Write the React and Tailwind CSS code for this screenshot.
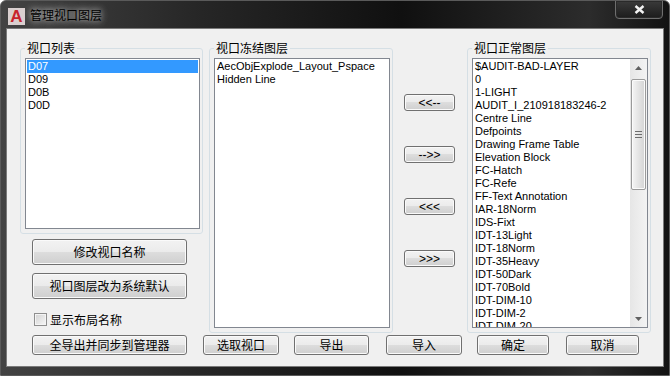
import React from "react";

const cjk = "font-['Noto_Sans_CJK_SC','Liberation_Sans',sans-serif]";
const latin = "font-['Liberation_Sans','Noto_Sans_CJK_SC',sans-serif]";
const btnSkin =
  "border border-[#707070] rounded-[3px] bg-[linear-gradient(to_bottom,#f2f2f2_0%,#ebebeb_50%,#dddddd_50%,#cfcfcf_100%)] shadow-[inset_0_0_0_1px_#fafafa] flex items-center justify-center text-black";

const normalLayers = [
  "$AUDIT-BAD-LAYER",
  "0",
  "1-LIGHT",
  "AUDIT_I_210918183246-2",
  "Centre Line",
  "Defpoints",
  "Drawing Frame Table",
  "Elevation Block",
  "FC-Hatch",
  "FC-Refe",
  "FF-Text Annotation",
  "IAR-18Norm",
  "IDS-Fixt",
  "IDT-13Light",
  "IDT-18Norm",
  "IDT-35Heavy",
  "IDT-50Dark",
  "IDT-70Bold",
  "IDT-DIM-10",
  "IDT-DIM-2",
  "IDT-DIM-20",
];

function Btn({ children, className = "", font = cjk }) {
  return (
    <button className={`${btnSkin} ${font} text-[12px] leading-none ${className}`}>
      {children}
    </button>
  );
}

function Group({ label, children, className = "" }) {
  return (
    <fieldset
      className={`border border-[#d5dfe5] rounded-[3px] pl-[4px] pr-[2px] pt-[2px] pb-[4px] ${className}`}
    >
      <legend className={`${cjk} text-[12px] leading-[16px] px-[2px] text-black`}>
        {label}
      </legend>
      {children}
    </fieldset>
  );
}

function Item({ text, selected }) {
  return (
    <div
      className={`h-[13px] leading-[13px] px-[1px] whitespace-nowrap ${
        selected ? "bg-[#3399ff] text-white" : "text-black"
      }`}
    >
      {text}
    </div>
  );
}

function ScrollBar() {
  return (
    <div className="w-[17px] h-full flex flex-col bg-[linear-gradient(to_right,#e6e6e6,#f3f3f3)]">
      <div className="h-[17px] flex items-center justify-center">
        <svg width="7" height="4" viewBox="0 0 7 4">
          <path d="M0 4 L3.5 0 L7 4 Z" fill="#606060" />
        </svg>
      </div>
      <div className="mt-[3px] mx-[1px] h-[111px] rounded-[2px] border border-[#9a9a9a] bg-[linear-gradient(to_right,#f5f5f5,#e4e4e4_50%,#d4d4d4)] shadow-[inset_0_0_0_1px_#fbfbfb] flex flex-col items-center justify-center gap-[2px]">
        <div className="w-[7px] h-[1px] bg-[#6d6d6d]" />
        <div className="w-[7px] h-[1px] bg-[#6d6d6d]" />
        <div className="w-[7px] h-[1px] bg-[#6d6d6d]" />
      </div>
      <div className="flex-1" />
      <div className="h-[17px] flex items-center justify-center">
        <svg width="7" height="4" viewBox="0 0 7 4">
          <path d="M0 0 L3.5 4 L7 0 Z" fill="#606060" />
        </svg>
      </div>
    </div>
  );
}

export default function App() {
  return (
    <div className="w-[670px] h-[376px] flex flex-col rounded-t-[6px] border border-[#5a5a5a] bg-[linear-gradient(to_right,#434343,#262626_30%,#101010_60%,#2c2c2c_88%,#121212)] overflow-hidden">
      {/* title bar */}
      <div className="h-[28px] flex items-start shrink-0">
        <div className="mt-[7px] ml-[7px] w-[17px] h-[17px] bg-[#d9cfcf] flex items-center justify-center">
          <span className="font-['Liberation_Sans',sans-serif] font-bold text-[17px] leading-none text-[#c8242c]">
            A
          </span>
        </div>
        <span
          className={`${cjk} ml-[5px] mt-[6px] text-[12px] leading-[16px] text-black [text-shadow:0_0_6px_rgba(255,255,255,0.75),0_0_10px_rgba(255,255,255,0.45)]`}
        >
          管理视口图层
        </span>
        <div className="ml-auto mr-[6px] w-[48px] h-[19px] -mt-[1px] rounded-b-[4px] border border-[#6e6e6e] bg-[linear-gradient(to_bottom,#3a3a3a,#1c1c1c)] shadow-[inset_0_0_0_1px_#2a2a2a] flex items-center justify-center">
          <svg width="11" height="9" viewBox="0 0 11 9">
            <path d="M1.5 1 L9.5 8 M9.5 1 L1.5 8" stroke="#f2f2f2" strokeWidth="2.4" />
          </svg>
        </div>
      </div>

      {/* client area */}
      <div className="mx-[6px] h-[337px] shrink-0 bg-[#f0f0f0] shadow-[0_0_0_1px_#7a7a7a] flex flex-col">
        <div className="h-[303px] pt-[11px] pl-[13px] flex items-start">
          {/* left column */}
          <div className="w-[183px] flex flex-col">
            <Group label="视口列表">
              <div className={`${latin} text-[11px] w-[175px] h-[171px] border border-[#828790] bg-white p-[1px]`}>
                <Item text="D07" selected />
                <Item text="D09" />
                <Item text="D0B" />
                <Item text="D0D" />
              </div>
            </Group>
            <Btn className="mt-[5px] ml-[12px] w-[155px] h-[26px]">修改视口名称</Btn>
            <Btn className="mt-[8px] ml-[12px] w-[155px] h-[26px]">视口图层改为系统默认</Btn>
            <div className="mt-[14px] ml-[14px] flex items-center">
              <div className="w-[13px] h-[13px] border border-[#8f8f8f] bg-[linear-gradient(135deg,#d2d2d2,#f7f7f7)] shadow-[inset_0_0_0_1px_#f4f4f4]" />
              <span className={`${cjk} ml-[3px] text-[12px] leading-[13px] text-black`}>显示布局名称</span>
            </div>
          </div>

          {/* frozen layers */}
          <Group label="视口冻结图层" className="ml-[6px] w-[184px]">
            <div className={`${latin} text-[11px] w-[176px] h-[270px] border border-[#828790] bg-white p-[1px]`}>
              <Item text="AecObjExplode_Layout_Pspace" />
              <Item text="Hidden Line" />
            </div>
          </Group>

          {/* transfer buttons */}
          <div className="w-[74px] pl-[11px] pt-[54px] flex flex-col gap-[35px]">
            <Btn font={latin} className="w-[51px] h-[17px] text-[11px]">&lt;&lt;--</Btn>
            <Btn font={latin} className="w-[51px] h-[17px] text-[11px]">--&gt;&gt;</Btn>
            <Btn font={latin} className="w-[51px] h-[17px] text-[11px]">&lt;&lt;&lt;</Btn>
            <Btn font={latin} className="w-[51px] h-[17px] text-[11px]">&gt;&gt;&gt;</Btn>
          </div>

          {/* normal layers */}
          <Group label="视口正常图层" className="w-[184px]">
            <div className={`${latin} text-[11px] w-[176px] h-[270px] border border-[#828790] bg-white flex`}>
              <div className="flex-1 p-[1px] overflow-hidden">
                {normalLayers.map((l) => (
                  <Item key={l} text={l} />
                ))}
              </div>
              <ScrollBar />
            </div>
          </Group>
        </div>

        {/* bottom buttons */}
        <div className="mt-[3px] flex">
          <Btn className="ml-[25px] w-[155px] h-[20px]">全导出并同步到管理器</Btn>
          <Btn className="ml-[16px] w-[76px] h-[20px]">选取视口</Btn>
          <Btn className="ml-[15px] w-[75px] h-[20px]">导出</Btn>
          <Btn className="ml-[17px] w-[76px] h-[20px]">导入</Btn>
          <Btn className="ml-[15px] w-[72px] h-[20px]">确定</Btn>
          <Btn className="ml-[17px] w-[73px] h-[20px]">取消</Btn>
        </div>
      </div>
    </div>
  );
}
